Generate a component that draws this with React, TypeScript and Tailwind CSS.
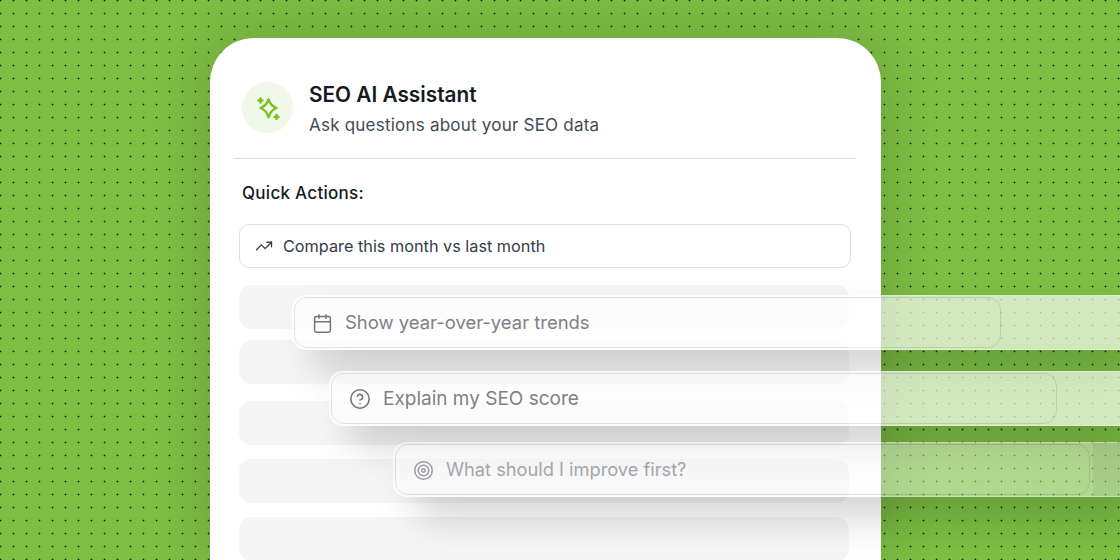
import { Calendar, CircleHelp, Target, TrendingUp } from "lucide-react";

function Strip({ left, right, top, height, tone, icon, text, textClass, extra, size }: any) {
  return (
    <div
      className={`absolute right-0 rounded-l-[14px] border-y border-l border-white/30 shadow-[20px_22px_40px_-2px_rgba(0,0,0,0.18)] ${tone}`}
      style={{ left, top, height }}
    >
      <div
        className="absolute bottom-[1px] left-[1px] top-[1px] flex items-center gap-[12px] rounded-[13px] border border-black/10 pl-[17px] pt-[1px]"
        style={{ width: right - left - 1 }}
      >
        {icon}
        <span className={textClass} style={{ fontSize: size }}>{text}</span>
      </div>
      {extra}
    </div>
  );
}

export default function App() {
  return (
    <div className="relative h-[560px] w-[1120px] overflow-hidden bg-[#7dbe43] font-['Inter',sans-serif]">
      <div className="absolute inset-0 bg-[radial-gradient(circle,#10180a_0.6px,transparent_1.15px)] bg-[size:13px_13px] bg-[position:7px_-6px]" />
      <div className="relative ml-[210px] mt-[38px] flex h-[522px] w-[671px] flex-col rounded-t-[44px] bg-white pl-[24px] pr-[25px] pt-[44px] shadow-[0_0_60px_rgba(0,0,0,0.16)]">
        <div className="flex shrink-0 items-start gap-[16px] border-b border-[#dcdfe5] pb-[21px] pl-[8px]">
          <div className="flex h-[51px] w-[51px] items-center justify-center rounded-full bg-[#f0f8e9]">
            <svg viewBox="0 0 26 26" className="h-[26px] w-[26px]" fill="none" stroke="#7cc11f" strokeWidth="2.400" strokeLinecap="round" strokeLinejoin="round">
              <path d="M13.500 4.500Q15.800 10.800 21.500 13Q15.800 15.200 13.500 22Q11.200 15.200 5.500 13Q11.200 10.800 13.500 4.500Z" />
              <path d="M5.500 3.500v4M3.500 5.500h4M21.500 20v4M19.500 22h4" />
            </svg>
          </div>
          <div className="-mt-[1px] flex flex-col gap-[4px]">
            <div className="text-[20.800px] font-semibold leading-[28px] text-[#151a22]">SEO AI Assistant</div>
            <div className="text-[17px] leading-[24px] tracking-[0.22px] text-[#414a56]">Ask questions about your SEO data</div>
          </div>
        </div>
        <div className="shrink-0 pl-[8px] pt-[22px] text-[17px] font-medium leading-[24px] tracking-[0.28px] text-[#151a22]">Quick Actions:</div>
        <div className="ml-[5px] mr-[5px] mt-[19px] flex h-[44px] shrink-0 items-center gap-[10px] rounded-[10px] border border-[#dcdfe5] pl-[15px] text-[16.250px] text-[#343c48]">
          <TrendingUp size={18} strokeWidth={1.800} />
          Compare this month vs last month
        </div>
        <div className="ml-[5px] mr-[7px] mt-[17px] flex flex-col">
          <div className="h-[44px] shrink-0 rounded-[13px] bg-[#f5f5f5]" />
          <div className="mt-[11px] h-[44px] shrink-0 rounded-[13px] bg-[#f5f5f5]" />
          <div className="mt-[17px] h-[44px] shrink-0 rounded-[13px] bg-[#f5f5f5]" />
          <div className="mt-[14px] h-[44px] shrink-0 rounded-[13px] bg-[#f5f5f5]" />
          <div className="mt-[14px] h-[44px] shrink-0 rounded-[13px] bg-[#f5f5f5]" />
        </div>
      </div>
      <Strip left={292} right={1000} top={295} height={55} tone="bg-white/65" size={18.45}
        icon={<Calendar size={21} strokeWidth={1.700} className="text-[#70757c]" />}
        text="Show year-over-year trends" textClass="text-[#7c8189]" />
      <Strip left={329} right={1056} top={371} height={55} tone="bg-white/65" size={19}
        icon={<CircleHelp size={22} strokeWidth={1.700} className="text-[#70757c]" />}
        text="Explain my SEO score" textClass="text-[#7c8189]" />
      <Strip left={393} right={1089} top={442} height={55} tone="bg-white/40" size={18.25}
        icon={<Target size={21} strokeWidth={1.700} className="text-[#9a9ea4]" />}
        text="What should I improve first?" textClass="text-[#a2a6ac]"
        extra={<div className="absolute bottom-0 right-0 top-0 w-[27px] bg-black/5" />} />
    </div>
  );
}
